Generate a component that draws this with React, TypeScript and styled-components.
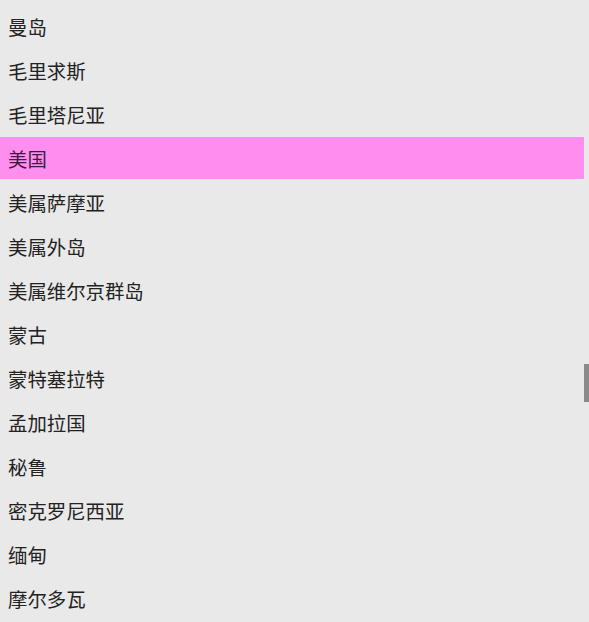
import { createGlobalStyle } from "styled-components";
import styled from "styled-components";

const GlobalStyle = createGlobalStyle`
  html, body {
    margin: 0;
    padding: 0;
    background: #e9e9e9;
  }
  body {
    font-family: "Noto Sans CJK SC", "Noto Sans", sans-serif;
  }
`;

// STYLED COMPONENTS
const Panel = styled.div`
  position: relative;
  width: 589px;
  height: 622px;
  overflow: hidden;
  background: #e9e9e9;
`;

const List = styled.ul`
  display: flex;
  flex-direction: column;
  gap: 2px;
  list-style: none;
  margin: 0;
  padding: 5px 5px 0 0;
`;

const Row = styled.li<{ $active?: boolean }>`
  display: flex;
  flex: none;
  align-items: center;
  height: 42px;
  padding-left: 8px;
  font-size: 19.4px;
  color: ${({ $active }) => ($active ? "#3a1e3a" : "#222")};
  background: ${({ $active }) => ($active ? "#ff8ef0" : "transparent")};
`;

const Thumb = styled.div`
  position: absolute;
  right: 0;
  top: 364px;
  width: 5px;
  height: 38px;
  background: #8a8a8a;
`;

const countries = [
  "曼岛",
  "毛里求斯",
  "毛里塔尼亚",
  "美国",
  "美属萨摩亚",
  "美属外岛",
  "美属维尔京群岛",
  "蒙古",
  "蒙特塞拉特",
  "孟加拉国",
  "秘鲁",
  "密克罗尼西亚",
  "缅甸",
  "摩尔多瓦",
];

export default function App() {
  return (
    <>
      <GlobalStyle />
      <Panel>
        <List>
          {countries.map((name) => (
            <Row key={name} $active={name === "美国"}>
              {name}
            </Row>
          ))}
        </List>
        <Thumb />
      </Panel>
    </>
  );
}
